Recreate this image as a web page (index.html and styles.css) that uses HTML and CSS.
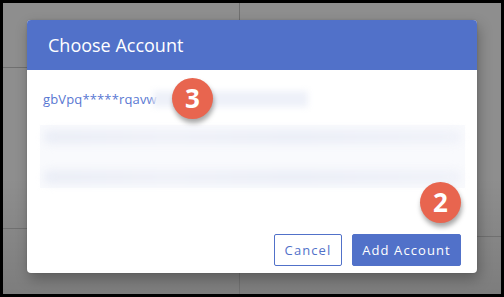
FILE: index.html
```html
<!DOCTYPE html>
<html>
<head>
<meta charset="utf-8">
<link rel="stylesheet" href="styles.css">
</head>
<body>
<div class="frame">
  <div class="modal">
    <div class="modal-header">Choose Account</div>
    <div class="modal-body">
      <div class="account-row">
        <span class="account-id">gbVpq*****rqavw</span>
        <span class="blur-bar"></span>
      </div>
      <div class="blur-block">
        <div class="blur-line"></div>
        <div class="blur-line"></div>
      </div>
    </div>
    <div class="modal-footer">
      <button class="btn btn-outline">Cancel</button>
      <button class="btn btn-primary">Add Account</button>
    </div>
    <div class="badge badge-3">3</div>
    <div class="badge badge-2">2</div>
  </div>
</div>
</body>
</html>
```
FILE: styles.css
```css
* { box-sizing: border-box; }
html, body { margin: 0; padding: 0; }
body { width: 504px; height: 297px; overflow: hidden; font-family: "Open Sans", "Noto Sans", sans-serif; }

.frame {
  width: 504px;
  height: 297px;
  border: 3px solid #000;
  padding: 17px 24px 0 24px;
  background-color: #8e8e8e;
  background-image:
    linear-gradient(#707070, #707070),
    linear-gradient(#707070, #707070),
    linear-gradient(#707070, #707070),
    linear-gradient(#707070, #707070),
    linear-gradient(to bottom, rgba(0,0,0,0) 0%, rgba(0,0,0,0) 60%, rgba(0,0,0,0.12) 100%);
  background-size: 24px 1px, 24px 1px, 1px 100%, 24px 1px, 100% 100%;
  background-position: 0 64px, 0 225px, 236px 0, 474px 233px, 0 0;
  background-repeat: no-repeat;
}

.modal {
  position: relative;
  width: 450px;
  height: 253px;
  background: #fff;
  border-radius: 4px;
  display: flex;
  flex-direction: column;
  box-shadow: 2px 6px 14px rgba(0,0,0,0.28), 0 0 2px rgba(0,0,0,0.15);
}

.modal-header {
  height: 50px;
  background: #5171c9;
  color: #fff;
  font-size: 18px;
  font-weight: 500;
  line-height: 50px;
  padding-left: 21px;
  border-radius: 4px 4px 0 0;
}

.modal-body {
  flex: 1;
  padding: 14px 12px 0 13px;
}

.account-row {
  display: flex;
  align-items: center;
  height: 30px;
  padding-left: 3px;
}
.account-id {
  color: #5877d2;
  font-size: 13px;
  font-weight: 500;
  letter-spacing: 0.15px;
  margin-right: -4px;
}
.blur-bar {
  width: 155px;
  height: 16px;
  background: #eef1f9;
  filter: blur(3px);
}

.blur-block {
  margin-top: 11px;
  height: 63px;
  background: #f9fafd;
  display: flex;
  flex-direction: column;
  justify-content: space-between;
  padding: 5px 4px 4px 4px;
}
.blur-line {
  height: 14px;
  background: linear-gradient(to right, #eaedf6, #eff1f8 30%, #ebeef7 60%, #f0f2f9);
  filter: blur(4px);
  border-radius: 6px;
}

.modal-footer {
  display: flex;
  justify-content: flex-end;
  gap: 10px;
  padding: 0 16px 7px 0;
}

.btn {
  height: 32px;
  font-family: "Open Sans", "Noto Sans", sans-serif;
  font-size: 13px;
  font-weight: 500;
  letter-spacing: 1.1px;
  border-radius: 2px;
  padding: 0;
  cursor: pointer;
}
.btn-outline {
  width: 68px;
  background: #fff;
  color: #5171c9;
  border: 1px solid #5171c9;
}
.btn-primary {
  width: 109px;
  background: #5171c9;
  color: #fff;
  border: 1px solid #5171c9;
}

.badge {
  position: absolute;
  width: 41px;
  height: 41px;
  border-radius: 50%;
  background: #e8654f;
  color: #fff;
  font-family: "Open Sans", "Noto Sans", sans-serif;
  font-weight: 700;
  font-size: 26px;
  line-height: 41px;
  text-align: center;
  box-shadow: 1px 4px 5px rgba(0,0,0,0.35);
}
.badge-3 { left: 145px; top: 58px; }
.badge-2 { left: 393px; top: 162px; }
```
